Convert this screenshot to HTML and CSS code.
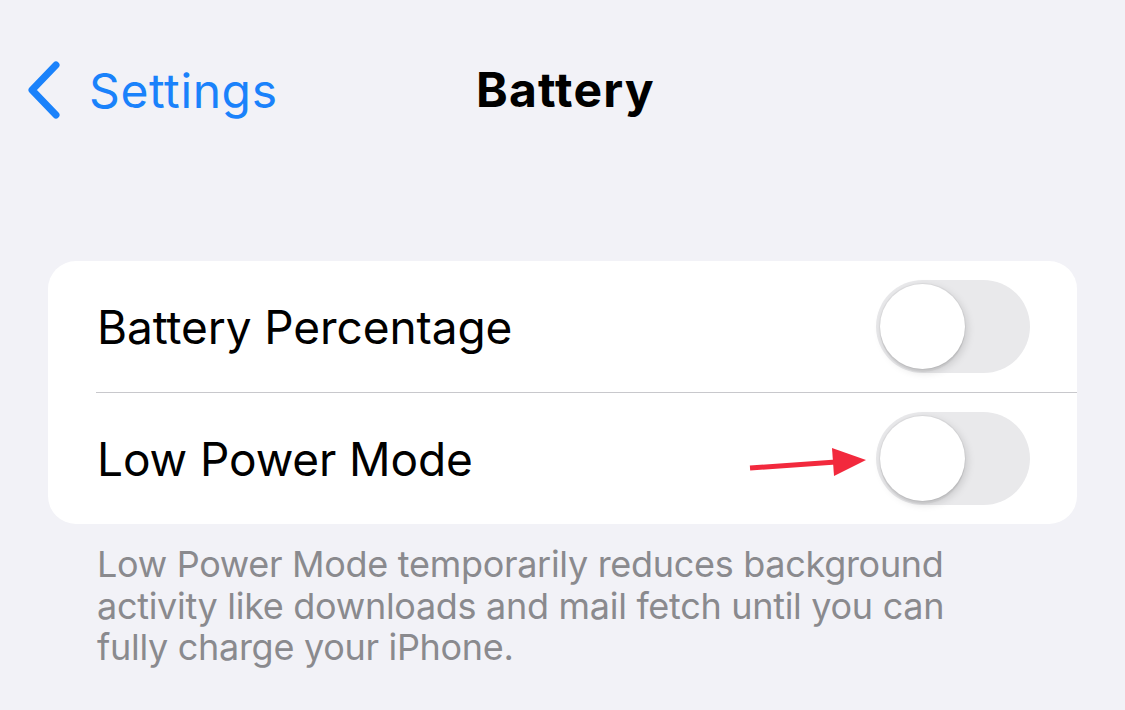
FILE: index.html
```html
<!DOCTYPE html>
<html>
<head>
<meta charset="utf-8">
<link rel="stylesheet" href="styles.css">
</head>
<body>
<div class="screen">
  <header class="nav">
    <div class="back">
      <svg class="chev" width="36" height="58" viewBox="0 0 36 58"><path d="M30 4 L6 29 L30 54" fill="none" stroke="#1a82fb" stroke-width="7" stroke-linecap="round" stroke-linejoin="round"/></svg>
      <span class="back-label">Settings</span>
    </div>
    <h1 class="title">Battery</h1>
  </header>
  <section class="card">
    <div class="row">
      <span class="label">Battery Percentage</span>
      <div class="toggle"><div class="knob"></div></div>
    </div>
    <div class="sep"></div>
    <div class="row">
      <span class="label">Low Power Mode</span>
      <div class="toggle-wrap">
        <svg class="arrow" width="120" height="40" viewBox="0 0 120 40"><path d="M2 24 L88 18" stroke="#f2293d" stroke-width="5" stroke-linecap="butt"/><path d="M84 4 L118 16 L86 32 Z" fill="#f2293d"/></svg>
        <div class="toggle"><div class="knob"></div></div>
      </div>
    </div>
  </section>
  <p class="footer">Low Power Mode temporarily reduces background activity like downloads and mail fetch until you can fully charge your iPhone.</p>
</div>
</body>
</html>
```
FILE: styles.css
```css
html, body { margin: 0; padding: 0; }
body {
  background: #f2f2f7;
  font-family: Inter, "Noto Sans", "Liberation Sans", sans-serif;
  width: 1125px;
  height: 710px;
  overflow: hidden;
}
.screen { padding: 0 48px; }
.nav {
  position: relative;
  height: 180px;
  display: flex;
  align-items: flex-start;
  padding-top: 60px;
  box-sizing: border-box;
}
.back {
  display: flex;
  align-items: center;
  margin-left: -22px;
  gap: 27px;
  height: 60px;
}
.chev { display: block; }
.back-label {
  color: #1a82fb;
  font-size: 48px;
  letter-spacing: 0.6px;
}
.title {
  margin: 0;
  position: absolute;
  left: 428px;
  top: 60px;
  height: 60px;
  line-height: 60px;
  font-size: 48px;
  font-weight: 700;
  color: #000;
  letter-spacing: 1.2px;
}
.card {
  background: #fff;
  border-radius: 28px;
  margin-top: 81px;
  width: 1029px;
}
.row {
  height: 131px;
  display: flex;
  align-items: center;
  justify-content: space-between;
  padding: 0 47px 0 49px;
}
.label {
  font-size: 46px;
  color: #000;
  letter-spacing: -0.1px;
}
.sep {
  height: 1px;
  background: #c8c8cc;
  margin-left: 48px;
}
.toggle-wrap { display: flex; align-items: center; position: relative; }
.arrow { position: absolute; right: 162px; top: 32px; }
.toggle {
  width: 154px;
  height: 93px;
  border-radius: 47px;
  background: #e9e9eb;
  position: relative;
}
.knob {
  position: absolute;
  left: 4px;
  top: 4px;
  width: 85px;
  height: 85px;
  border-radius: 50%;
  background: #fff;
  box-shadow: 2px 3px 8px rgba(0,0,0,0.15), 0 3px 1px rgba(0,0,0,0.06), 0 0 0 1px rgba(0,0,0,0.04);
}
.footer {
  margin: 20px 0 0 49px;
  color: #8a8a8e;
  font-size: 36px;
  line-height: 41.5px;
  width: 900px;
  letter-spacing: -0.3px;
}
```
